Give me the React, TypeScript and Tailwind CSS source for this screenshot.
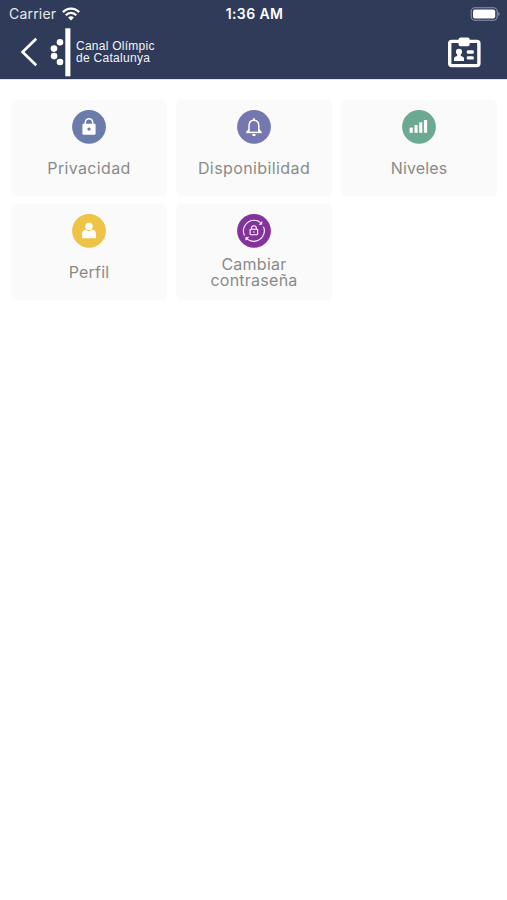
import type { ReactNode } from 'react';

function StatusBar() {
  return (
    <div className="grid h-7 grid-cols-3 items-center pl-[9px] pr-[7px] font-['Inter',sans-serif] text-[14px] leading-none text-white">
      <div className="flex items-center gap-[6px]">
        <span className="w-[47px] whitespace-nowrap tracking-[0.2px] text-gray-200">Carrier</span>
        <svg width="18" height="14" viewBox="0 0 18 14" fill="none" stroke="white" strokeWidth="2.3">
          <path d="M.9 5.1C5.4.4 12.6.4 17.1 5.1" />
          <path d="M3.8 8.2c2.9-3 7.5-3 10.4 0" />
          <path d="M6.1 10.4c1.7-1.6 4.1-1.6 5.8 0L9 13.4z" fill="white" stroke="none" />
        </svg>
      </div>
      <div className="whitespace-nowrap text-center font-semibold tracking-[0.4px]">1:36 AM</div>
      <div className="flex justify-end">
        <svg width="30" height="14" viewBox="0 0 30 14" fill="none">
          <rect x="1.2" y=".7" width="26" height="12.6" rx="3.8" stroke="#8d94ac" strokeWidth="1.1" />
          <rect x="3" y="2.6" width="22.2" height="8.8" rx="2" fill="white" />
          <path d="M28.4 4.9c1.6.7 1.6 3.5 0 4.2z" fill="#8d94ac" />
        </svg>
      </div>
    </div>
  );
}

function NavBar() {
  return (
    <div className="flex h-[51px] items-start justify-between pl-[20px] pr-[26px]">
      <div className="flex">
        <svg width="51" height="49" viewBox="20 28 51 49" fill="none">
          <path d="M36.2 38.8 22.6 52l13.6 13.2" stroke="white" strokeWidth="2.7" />
          <g fill="white">
            <circle cx="60" cy="42.2" r="3.3" />
            <circle cx="54" cy="48.6" r="3.3" />
            <circle cx="54.1" cy="56.1" r="3.3" />
            <circle cx="60" cy="62" r="3.3" />
            <rect x="65.3" y="28.3" width="5.1" height="48" />
          </g>
        </svg>
        <div className="ml-[5px] mt-[11.5px] whitespace-nowrap font-['Liberation_Sans',sans-serif] text-[12px] leading-[12.5px] text-gray-100">
          <div className="tracking-[0.26px]">Canal Olímpic</div>
          <div className="tracking-[0.29px]">de Catalunya</div>
        </div>
      </div>
      <svg className="mt-[9px]" width="34" height="32" viewBox="447 37 34 32" fill="white">
        <rect x="449.7" y="41.4" width="29.2" height="24.2" rx="2" fill="none" stroke="white" strokeWidth="3.4" />
        <rect x="458.6" y="37.4" width="11" height="8.8" rx="1.8" />
        <circle cx="459" cy="51.8" r="3.1" />
        <path d="M457.2 53h3.6v3c2.2.4 3.2 1.2 3.2 2.6V61h-10v-2.4c0-1.4 1-2.2 3.2-2.6z" />
        <rect x="466.8" y="50.3" width="7" height="3.4" rx="1.3" />
        <rect x="466.8" y="56.2" width="7" height="3.4" rx="1.3" />
      </svg>
    </div>
  );
}

const lockIcon = (
  <g>
    <path d="M13.3 15.5v-3.1a3.7 3.7 0 0 1 7.4 0v3.1" fill="none" stroke="white" strokeWidth="1.5" />
    <rect x="10.4" y="13.8" width="13.2" height="11" rx="1.2" fill="white" />
    <circle cx="17" cy="19.1" r="1.7" fill="#6b7bab" />
  </g>
);

const bellIcon = (
  <g fill="none" stroke="white" strokeWidth="1.5">
    <path d="M12 22.3V16c0-3.6 2-5.7 4.9-5.7s4.9 2.1 4.9 5.7v6.3" />
    <path d="M9.1 22.4h15.6" />
    <path d="M16.9 8.2v2.4M15.4 24.9h3" strokeWidth="2" />
    <path d="m9.9 22 2.1-2.2m9.8 0 2.1 2.2" />
  </g>
);

const barsIcon = (
  <g fill="white">
    <rect x="7.6" y="17.6" width="3.2" height="5.2" />
    <rect x="12.5" y="15" width="3.1" height="7.8" />
    <rect x="17.2" y="12.4" width="3.1" height="10.4" />
    <rect x="21.9" y="10" width="3.2" height="12.8" />
  </g>
);

const personIcon = (
  <g fill="white">
    <circle cx="17" cy="12.4" r="3.7" />
    <path d="M13.6 15.6c1.8 2 5 2 6.8 0 2.7.6 3.6 2.2 3.6 5v2.8c0 .6-.3.9-.9.9H11c-.6 0-.9-.3-.9-.9v-2.8c0-2.8.8-4.4 3.5-5z" />
  </g>
);

const changeLockIcon = (
  <g fill="none" stroke="white" strokeWidth="1.1">
    <path d="M7.4 21.4A10.6 10.6 0 0 1 23.6 8.6" />
    <path d="M26.5 12.6A10.6 10.6 0 0 1 10.2 25.1" />
    <path d="m22.3 10.5 2.7-.2-.1-2.7zM11.6 23.3l-2.9.1.2 2.8z" fill="white" strokeWidth=".6" />
    <rect x="13.1" y="15.3" width="7.6" height="5.4" rx=".6" />
    <path d="M14.5 15.3v-1.2a2.4 2.4 0 0 1 4.8 0v1.2M16.9 17.2v1.5" />
  </g>
);

type CardProps = { color: string; icon: ReactNode; children: ReactNode };

function Card({ color, icon, children }: CardProps) {
  return (
    <div className="flex h-24 flex-col items-center rounded-[6px] bg-[#fafafa] pt-[10px]">
      <svg width="34" height="34" viewBox="0 0 34 34">
        <circle cx="17" cy="16.9" r="16.9" className={color} />
        {icon}
      </svg>
      <div className="flex h-12 items-center justify-center whitespace-nowrap text-center text-[16px] leading-4 text-[#8a8a8a]">
        {children}
      </div>
    </div>
  );
}

export default function App() {
  return (
    <div className="min-h-screen bg-white font-['Inter',sans-serif]">
      <header className="h-[79px] bg-[#303b5a]">
        <StatusBar />
        <NavBar />
      </header>
      <div className="h-px bg-[#dfe4ec]" />
      <main className="grid grid-cols-3 gap-x-[9px] gap-y-2 pl-[11px] pr-[10px] pt-5">
        <Card color="fill-[#6b7bab]" icon={lockIcon}>
          <span className="tracking-[0.35px]">Privacidad</span>
        </Card>
        <Card color="fill-[#7477b0]" icon={bellIcon}>
          <span className="tracking-[0.4px]">Disponibilidad</span>
        </Card>
        <Card color="fill-[#6ca993]" icon={barsIcon}>
          <span className="tracking-[0.15px]">Niveles</span>
        </Card>
        <Card color="fill-[#edc445]" icon={personIcon}>
          <span className="tracking-[0.2px]">Perfil</span>
        </Card>
        <Card color="fill-[#84329e]" icon={changeLockIcon}>
          <p className="tracking-[0.25px]">
            Cambiar
            <br />
            contraseña
          </p>
        </Card>
      </main>
    </div>
  );
}
